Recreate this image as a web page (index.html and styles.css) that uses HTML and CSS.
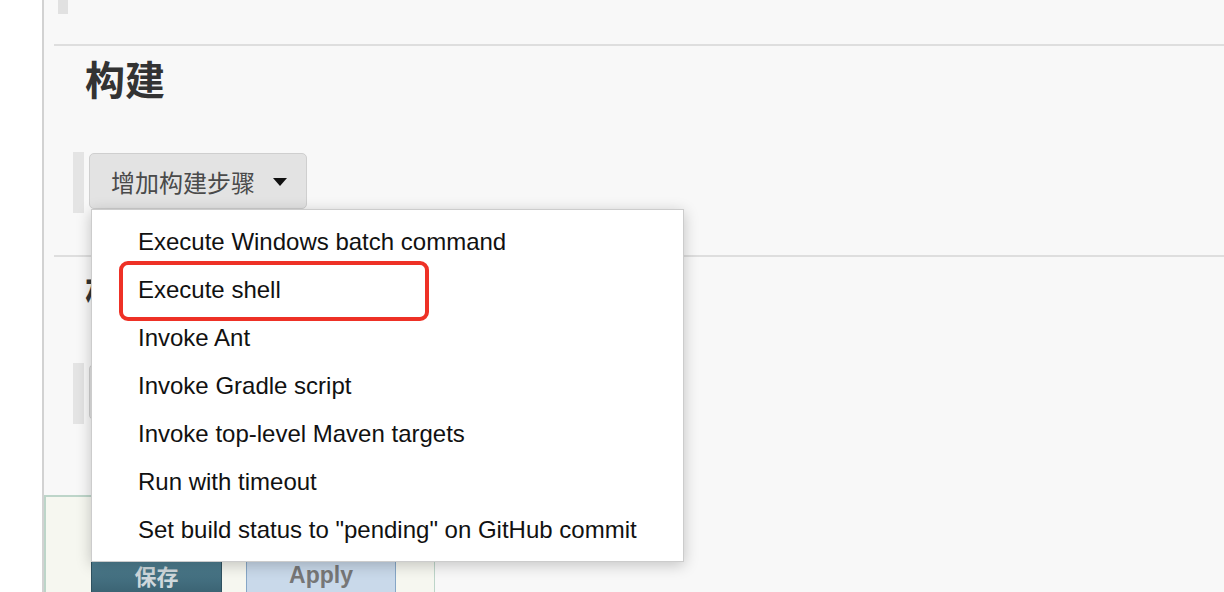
FILE: index.html
```html
<!DOCTYPE html>
<html lang="zh-CN">
<head>
<meta charset="utf-8">
<title>构建</title>
<link rel="stylesheet" href="styles.css">
</head>
<body>
<div class="page">
  <div class="gutter"></div>
  <main class="main">
    <div class="prev-tail"><span class="stub"></span></div>
    <div class="rule"></div>
    <section class="section">
      <h2 class="section-title">构建</h2>
      <div class="step-row">
        <span class="side-bar"></span>
        <div class="dropdown">
          <button class="btn-add">增加构建步骤<span class="caret"></span></button>
          <ul class="menu">
            <li class="menu-item">Execute Windows batch command</li>
            <li class="menu-item">Execute shell</li>
            <li class="menu-item">Invoke Ant</li>
            <li class="menu-item">Invoke Gradle script</li>
            <li class="menu-item">Invoke top-level Maven targets</li>
            <li class="menu-item">Run with timeout</li>
            <li class="menu-item">Set build status to "pending" on GitHub commit</li>
            <li class="highlight"></li>
          </ul>
        </div>
      </div>
    </section>
    <div class="rule rule-second"></div>
    <section class="section">
      <h2 class="section-title">构建后操作</h2>
      <div class="step-row">
        <span class="side-bar"></span>
        <button class="btn-add">增加构建后操作步骤<span class="caret"></span></button>
      </div>
    </section>
    <div class="bottom-bar">
      <button class="btn-save">保存</button>
      <button class="btn-apply">Apply</button>
    </div>
  </main>
</div>
</body>
</html>
```

FILE: styles.css
```css
* { box-sizing: border-box; }
html, body { margin: 0; padding: 0; }
body {
  background: #ffffff;
  font-family: "Liberation Sans", "Noto Sans CJK SC", sans-serif;
}
.page {
  display: flex;
  height: 100vh;
  overflow: hidden;
}
.gutter {
  width: 42px;
  flex: none;
  background: #ffffff;
}
.main {
  flex: 1;
  background: #f8f8f8;
  border-left: 2px solid #d2d2d2;
  display: flex;
  flex-direction: column;
}
.prev-tail {
  height: 14px;
  padding-left: 14px;
  display: flex;
}
.stub {
  width: 10px;
  height: 14px;
  background: #e1e1e1;
}
.rule {
  margin-top: 30px;
  margin-left: 10px;
  height: 2px;
  background: #dedede;
  flex: none;
}
.rule-second {
  margin-top: 42px;
}
.section-title {
  margin: 8px 0 50px;
  padding-left: 41px;
  font-family: "Noto Sans CJK SC", sans-serif;
  font-size: 40px;
  line-height: 48px;
  font-weight: bold;
  color: #333333;
  white-space: nowrap;
}
.step-row {
  display: flex;
  align-items: flex-start;
  padding-left: 29px;
  gap: 5px;
}
.side-bar {
  width: 11px;
  height: 61px;
  background: #e4e4e4;
  flex: none;
}
.dropdown {
  position: relative;
}
.btn-add {
  margin-top: 1px;
  height: 56px;
  padding: 0 19px 0 21px;
  display: flex;
  align-items: center;
  gap: 18px;
  background: #e3e3e3;
  border: 1px solid #cfcfcf;
  border-radius: 5px;
  font-family: "Noto Sans CJK SC", sans-serif;
  font-size: 24px;
  color: #4a4a4a;
  white-space: nowrap;
}
.caret {
  width: 0;
  height: 0;
  border-left: 7px solid transparent;
  border-right: 7px solid transparent;
  border-top: 8px solid #111111;
  margin-top: 2px;
}
.menu {
  position: absolute;
  left: 2px;
  top: 57px;
  width: 593px;
  margin: 0;
  padding: 8px 0 7px;
  list-style: none;
  background: #ffffff;
  border: 1px solid #cccccc;
  box-shadow: 0 3px 14px rgba(0, 0, 0, 0.22);
  z-index: 10;
}
.menu-item {
  height: 48px;
  line-height: 48px;
  padding-left: 46px;
  font-size: 24px;
  color: #111111;
  white-space: nowrap;
}
.highlight {
  position: absolute;
  left: 27px;
  top: 51px;
  width: 310px;
  height: 60px;
  border: 4px solid #ee3126;
  border-radius: 9px;
  pointer-events: none;
}
.bottom-bar {
  margin-top: 71px;
  width: 391px;
  flex: 1;
  background: #f6f7f0;
  border-top: 2px solid #bdd5c9;
  border-left: 2px solid #bdd5c9;
  border-right: 1px solid #bdd5c9;
  padding: 64px 0 0 45px;
  display: flex;
  align-items: flex-start;
  gap: 24px;
}
.btn-save {
  width: 131px;
  height: 32px;
  background: linear-gradient(#4e7e90, #3b6373);
  border: 1px solid #2f5261;
  border-bottom: 0;
  color: #cfd8dc;
  font-family: "Noto Sans CJK SC", sans-serif;
  font-size: 22px;
  font-weight: bold;
  padding: 0 0 5px;
  line-height: 26px;
}
.btn-apply {
  width: 150px;
  height: 32px;
  background: #c9d9ea;
  border: 1px solid #86a6c6;
  border-bottom: 0;
  color: #777777;
  font-family: "Liberation Sans", sans-serif;
  font-size: 23px;
  font-weight: bold;
  padding: 0 0 5px;
  line-height: 26px;
}
```
